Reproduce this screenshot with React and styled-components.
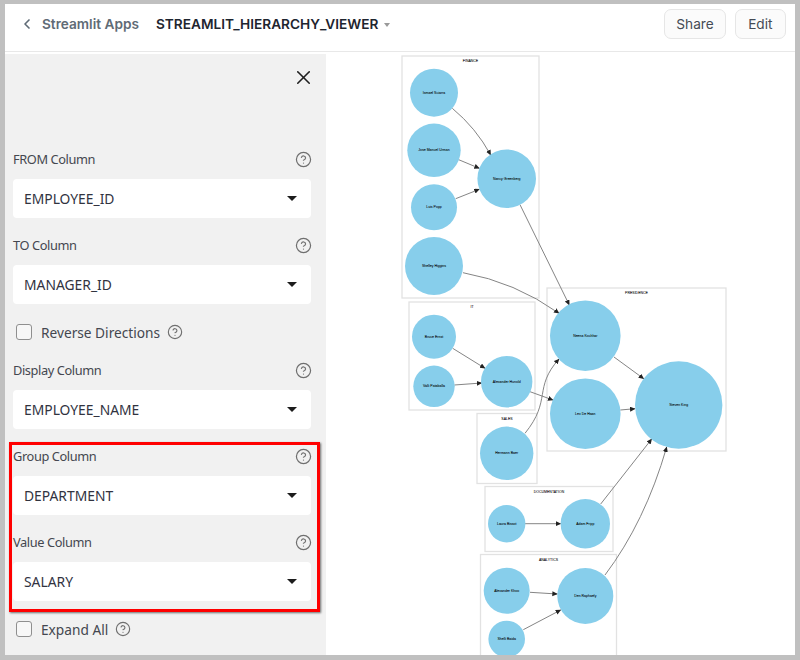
import styled, { createGlobalStyle } from 'styled-components';
import { ChevronLeft, CircleHelp, X } from 'lucide-react';

const GlobalStyle = createGlobalStyle`
  html, body {
    margin: 0;
    padding: 0;
    background: #c0c0c0;
  }
`;

const Frame = styled.div`
  width: 790px;
  height: 651px;
  margin: 4px 5px 5px;
  background: #ffffff;
  display: flex;
  flex-direction: column;
  overflow: hidden;
`;

const TopBar = styled.div`
  height: 48px;
  flex: none;
  box-sizing: border-box;
  display: flex;
  align-items: center;
  padding: 0 9px 7px 14px;
  border-bottom: 1px solid #e8e8e8;
  font-family: 'Inter', sans-serif;
  font-size: 13.65px;
`;

const BackLink = styled.div`
  display: flex;
  align-items: center;
  gap: 7px;
  color: #5f6b76;
  font-weight: 600;
`;

const AppName = styled.div`
  margin-left: 17px;
  color: #1e252f;
  font-weight: 600;
`;

const NameCaret = styled.div`
  width: 0;
  height: 0;
  margin: 1px 0 0 6px;
  border-left: 3.5px solid transparent;
  border-right: 3.5px solid transparent;
  border-top: 4px solid #9a9a9a;
`;

const TopActions = styled.div`
  margin-left: auto;
  display: flex;
  gap: 9px;
`;

const TopButton = styled.div`
  height: 30px;
  padding: 0 ${props => props.$pad}px;
  display: flex;
  align-items: center;
  box-sizing: border-box;
  border: 1px solid #e6e6e6;
  border-radius: 7px;
  background: #fbfbfb;
  color: #444b55;
`;

const Body = styled.div`
  flex: 1;
  min-height: 0;
  display: flex;
  padding-top: 2px;
`;

const Sidebar = styled.div`
  width: 321px;
  flex: none;
  box-sizing: border-box;
  padding: 13px 15px 0 8px;
  background: #f1f1f1;
  font-family: 'Noto Sans', sans-serif;
`;

const CloseRow = styled.div`
  height: 20px;
  margin: 0 -4px 61px 0;
  display: flex;
  justify-content: flex-end;
  align-items: center;
  color: #1f1f1f;
`;

const Field = styled.div`
  margin-bottom: 16px;
`;

const LabelRow = styled.div`
  height: 22px;
  margin-bottom: 9px;
  display: flex;
  justify-content: space-between;
  align-items: center;
  color: #44474f;
  font-size: 12.8px;
  letter-spacing: -0.4px;
`;

const HelpIcon = styled(CircleHelp)`
  color: #6f6f6f;
  flex: none;
`;

const FieldHelp = styled(HelpIcon)`
  margin-right: -1px;
`;

const Select = styled.div`
  height: 39px;
  box-sizing: border-box;
  padding: 0 14px 0 11px;
  display: flex;
  justify-content: space-between;
  align-items: center;
  border-radius: 4px;
  background: #ffffff;
  color: #31333f;
  font-size: 13.85px;
`;

const SelectCaret = styled.div`
  width: 0;
  height: 0;
  border-left: 5px solid transparent;
  border-right: 5px solid transparent;
  border-top: 5px solid #1c1c1c;
`;

const CheckRow = styled.div`
  height: 20px;
  margin: 18px 0 17px 3px;
  display: flex;
  align-items: center;
  color: #44474f;
  font-size: 13.7px;
`;

const CheckBox = styled.div`
  width: 16px;
  height: 16px;
  margin-right: 9px;
  border: 1px solid #8f8f8f;
  border-radius: 3px;
  background: #f7f7f7;
  box-sizing: border-box;
`;

const CheckText = styled.div`
  margin-right: 7px;
`;

const HighlightGroup = styled.div`
  position: relative;

  &::after {
    content: '';
    position: absolute;
    inset: -3px -9px -11px -4px;
    border: 3px solid #ff0000;
    box-shadow: 1px 1px 2px rgba(0, 0, 0, 0.55);
    pointer-events: none;
  }
`;

const GraphPane = styled.div`
  flex: 1;
  min-width: 0;
`;

const GraphSvg = styled.svg`
  display: block;
  width: 469px;
  height: 601px;
`;

const ClusterBox = styled.rect`
  fill: #ffffff;
  stroke: #e2e2e2;
  stroke-width: 1.3;
`;

const Edge = styled.path`
  fill: none;
  stroke: #858585;
  stroke-width: 1;
`;

const NodeCircle = styled.circle`
  fill: #87ceeb;
`;

const GraphText = styled.text`
  font-family: 'Liberation Sans', sans-serif;
  font-size: 3.5px;
  fill: #000000;
  stroke: #000000;
  stroke-width: 0.04;
  text-anchor: middle;
  dominant-baseline: middle;
`;

const clusters = [
  { name: 'FINANCE', x: 402, y: 56, w: 137, h: 242 },
  { name: 'IT', x: 409, y: 302, w: 126, h: 108 },
  { name: 'PRESIDENCE', x: 547, y: 288, w: 179, h: 163 },
  { name: 'SALES', x: 477, y: 413.5, w: 60, h: 70 },
  { name: 'DOCUMENTATION', x: 485, y: 486.5, w: 128, h: 65 },
  { name: 'ANALYTICS', x: 480.5, y: 554.5, w: 136, h: 110 },
];

const nodes = [
  { name: 'Ismael Sciarra', x: 434, y: 92.7, r: 24 },
  { name: 'Jose Manuel Urman', x: 434, y: 150.3, r: 26.7 },
  { name: 'Nancy Greenberg', x: 506.7, y: 178.7, r: 29.3 },
  { name: 'Luis Popp', x: 434, y: 207.3, r: 23 },
  { name: 'Shelley Higgins', x: 434, y: 266, r: 29 },
  { name: 'Bruce Ernst', x: 434, y: 336.7, r: 22 },
  { name: 'Valli Pataballa', x: 434, y: 386.3, r: 20.7 },
  { name: 'Alexander Hunold', x: 506.7, y: 381.7, r: 25.7 },
  { name: 'Neena Kochhar', x: 585.3, y: 335.7, r: 35.3 },
  { name: 'Lex De Haan', x: 585.3, y: 413.7, r: 35.3 },
  { name: 'Steven King', x: 678.7, y: 405, r: 43.7 },
  { name: 'Hermann Baer', x: 506.7, y: 453.3, r: 26.7 },
  { name: 'Laura Bissot', x: 506.7, y: 523.7, r: 18.7 },
  { name: 'Adam Fripp', x: 585.3, y: 523.7, r: 24.7 },
  { name: 'Alexander Khoo', x: 506.7, y: 590.7, r: 23 },
  { name: 'Den Raphaely', x: 585.3, y: 596, r: 28 },
  { name: 'Shelli Baida', x: 506.7, y: 639, r: 18.3 },
];

const edges = [
  'M452.3 108.3 Q476 128 490.7 155',
  'M458.7 159.7 L479.3 168.3',
  'M455.7 198.7 L479.3 189.3',
  'M520 204.7 L569.3 305',
  'M463 272.7 Q515 282 559 313.3',
  'M452.7 348.3 L485 368.3',
  'M454.3 385 L481.7 383',
  'M530 391.7 L553 400',
  'M525 433.3 C552 400 533 388 559 359',
  'M614 357 L643.7 378.7',
  'M620.3 410 L635 408.7',
  'M600.7 504 L651.7 439',
  'M605 575 Q645 522 666.7 447',
  'M525 523.7 L560.7 523.7',
  'M530 592.3 L557.3 594',
  'M523.3 629.7 L560.7 610',
];

function SelectField({ label, value }) {
  return (
    <Field>
      <LabelRow>
        {label}
        <FieldHelp size={17} strokeWidth={1.7} />
      </LabelRow>
      <Select>
        {value}
        <SelectCaret />
      </Select>
    </Field>
  );
}

function Graph() {
  return (
    <GraphSvg viewBox="326 54 469 601">
      <defs>
        <marker id="arrow" markerWidth="6" markerHeight="6" refX="5" refY="2.5" orient="auto" markerUnits="userSpaceOnUse">
          <path d="M0 0 L5.5 2.5 L0 5 Z" fill="#222222" />
        </marker>
      </defs>
      {clusters.map(c => (
        <g key={c.name}>
          <ClusterBox x={c.x} y={c.y} width={c.w} height={c.h} />
          <GraphText x={c.x + c.w / 2} y={c.y + 5.5}>{c.name}</GraphText>
        </g>
      ))}
      {edges.map(d => (
        <Edge key={d} d={d} markerEnd="url(#arrow)" />
      ))}
      {nodes.map(n => (
        <g key={n.name}>
          <NodeCircle cx={n.x} cy={n.y} r={n.r} />
          <GraphText x={n.x} y={n.y}>{n.name}</GraphText>
        </g>
      ))}
    </GraphSvg>
  );
}

function App() {
  return (
    <>
      <GlobalStyle />
      <Frame>
        <TopBar>
          <BackLink>
            <ChevronLeft size={16} strokeWidth={2.5} />
            Streamlit Apps
          </BackLink>
          <AppName>STREAMLIT_HIERARCHY_VIEWER</AppName>
          <NameCaret />
          <TopActions>
            <TopButton $pad={11}>Share</TopButton>
            <TopButton $pad={12.5}>Edit</TopButton>
          </TopActions>
        </TopBar>
        <Body>
          <Sidebar>
            <CloseRow>
              <X size={23} strokeWidth={1.6} />
            </CloseRow>
            <SelectField label="FROM Column" value="EMPLOYEE_ID" />
            <SelectField label="TO Column" value="MANAGER_ID" />
            <CheckRow>
              <CheckBox />
              <CheckText>Reverse Directions</CheckText>
              <HelpIcon size={16} strokeWidth={1.7} />
            </CheckRow>
            <SelectField label="Display Column" value="EMPLOYEE_NAME" />
            <HighlightGroup>
              <SelectField label="Group Column" value="DEPARTMENT" />
              <SelectField label="Value Column" value="SALARY" />
            </HighlightGroup>
            <CheckRow>
              <CheckBox />
              <CheckText>Expand All</CheckText>
              <HelpIcon size={16} strokeWidth={1.7} />
            </CheckRow>
          </Sidebar>
          <GraphPane>
            <Graph />
          </GraphPane>
        </Body>
      </Frame>
    </>
  );
}

export default App;
